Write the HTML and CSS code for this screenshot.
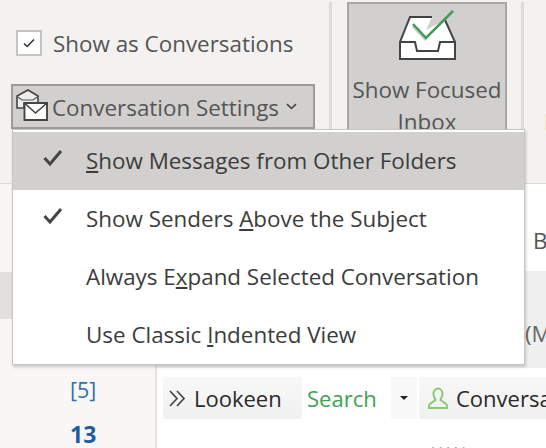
FILE: index.html
```html
<!DOCTYPE html>
<html lang="en">
<head>
<meta charset="utf-8">
<title>Conversation Settings</title>
<link rel="stylesheet" href="styles.css">
</head>
<body>
<div class="ribbon">
  <div class="group-conv">
    <label class="show-conv"><span class="checkbox"><svg width="14" height="12" viewBox="0 0 14 12"><path d="M2 6.500 5.200 9.500 12 2.500" fill="none" stroke="#333" stroke-width="1.600"/></svg></span><span>Show as Conversations</span></label>
    <div class="conv-btn">
      <svg class="conv-icon" width="34" height="36" viewBox="0 0 34 36"><path d="M2 21V9L13 3 23 9V16H9V21Z" fill="#eeedec" stroke="#444" stroke-width="1.600"/><path d="M2 9.500 7 13H18L23 9.500" fill="none" stroke="#555" stroke-width="1.200"/><path d="M9.500 16H32V33H9.500Z" fill="#fff" stroke="#444" stroke-width="1.900"/><path d="M9.500 16 20.500 26 32 16" fill="none" stroke="#444" stroke-width="1.600"/></svg>
      <span class="conv-label">Conversation Settings</span>
      <svg class="chev" width="11" height="7" viewBox="0 0 11 7"><path d="M1 1.200 5.500 5.500 10 1.200" fill="none" stroke="#444" stroke-width="1.600"/></svg>
    </div>
  </div>
  <div class="sep"></div>
  <div class="focused">
    <svg width="62" height="56" viewBox="0 0 62 56"><path d="M14 9H36L30 22 49 12 59 34V51H4V34Z" fill="#fff"/><path d="M36 9H14L4 34V51H59V34L49 12M4 34H19L21 43H42L44 34H59" fill="none" stroke="#444" stroke-width="2"/><path d="M17 18 30 32" fill="none" stroke="#999" stroke-width="3" opacity=".5"/><path d="M17 16 30 30 57 3" fill="none" stroke="#3f9c55" stroke-width="2.500"/></svg>
    <span class="focused-label">Show Focused<br>Inbox</span>
  </div>
  <div class="sep sep-last"></div>
  <div class="cut-off">I</div>
</div>
<div class="lower">
  <aside class="folders">
    <div class="folder-sel"></div>
    <div class="count">[5]</div>
    <div class="count-bold">13</div>
  </aside>
  <main class="content">
    <div class="mail-row">B</div>
    <div class="mail-row-sel">(M</div>
    <div class="tabs">
      <div class="tab tab-lookeen"><svg width="17" height="17" viewBox="0 0 17 17"><path d="M1 1 8 8.500 1 16M8 1 15 8.500 8 16" fill="none" stroke="#444" stroke-width="1.700"/></svg><span>Lookeen</span></div>
      <div class="tab-search">Search</div>
      <div class="tab-drop"><span class="tri"></span></div>
      <div class="tab tab-conv"><svg width="20" height="22" viewBox="0 0 20 22"><path d="M5.500 7a4.500 5.500 0 1 1 9 0c0 3-2 5-2 6l5 3.500c1 .7 1.500 1.500 1.500 2.500v2H1v-2c0-1 .5-1.800 1.500-2.500l5-3.500c0-1-2-3-2-6Z" fill="none" stroke="#86c96f" stroke-width="1.900"/></svg><span>Conversa</span></div>
    </div>
    <div class="dots">.....</div>
  </main>
</div>
<div class="menu">
  <div class="item item-on"><svg class="tick" width="20" height="18" viewBox="0 0 20 18"><path d="M1.500 9 7 15 18 2" fill="none" stroke="#444" stroke-width="3"/></svg><span><u>S</u>how Messages from Other Folders</span></div>
  <div class="item"><svg class="tick" width="20" height="18" viewBox="0 0 20 18"><path d="M1.500 9 7 15 18 2" fill="none" stroke="#444" stroke-width="3"/></svg><span>Show Senders <u>A</u>bove the Subject</span></div>
  <div class="item"><span class="notick"></span><span>Always E<u>x</u>pand Selected Conversation</span></div>
  <div class="item"><span class="notick"></span><span>Use Classic <u>I</u>ndented View</span></div>
</div>
</body>
</html>
```
FILE: styles.css
```css
* { box-sizing: border-box; }
html, body { margin: 0; height: 100%; overflow: hidden; }
body {
  position: relative;
  width: 546px;
  height: 448px;
  background: #fff;
  font-family: "Open Sans", "Noto Sans", sans-serif;
  font-size: 22.400px;
  color: #444;
}
.ribbon {
  display: flex;
  height: 184px;
  background: #f3f2f1;
  border-bottom: 1px solid #dcdbda;
}
.group-conv {
  width: 329px;
  padding: 28px 0 0 11px;
  flex: none;
}
.show-conv {
  display: flex;
  align-items: center;
  gap: 11px;
  margin-left: 5px;
  height: 30px;
  color: #555;
}
.checkbox {
  width: 26px;
  height: 26px;
  background: #fff;
  border: 2px solid #c4c4c4;
  display: flex;
  align-items: center;
  justify-content: center;
}
.conv-btn {
  display: flex;
  align-items: center;
  width: 304px;
  height: 45px;
  margin-top: 26px;
  background: #d2d0ce;
  border: 2px solid #9c9b9a;
  color: #555;
}
.conv-icon { margin-left: 2px; margin-top: -3px; flex: none; }
.conv-label { margin-left: 3px; margin-top: 2px; white-space: nowrap; }
.chev { margin-left: 7px; flex: none; }
.sep { width: 3px; height: 136px; background: #dddcdb; margin-top: 2px; flex: none; }
.focused {
  width: 160px;
  height: 140px;
  margin: 2px 0 0 15px;
  background: #d2d0ce;
  border: 2px solid #a8a7a6;
  display: flex;
  flex-direction: column;
  align-items: center;
  padding-top: 4px;
  flex: none;
}
.focused-label {
  text-align: center;
  line-height: 32px;
  color: #555;
  margin-top: 10px;
  white-space: nowrap;
}
.sep-last { margin-left: 14px; }
.cut-off { margin: 106px 0 0 20px; color: #444; }
.lower { display: flex; height: 264px; }
.folders {
  width: 157px;
  background: #f8f7f6;
  border-right: 2px solid #e4e3e2;
  padding-top: 88px;
  flex: none;
}
.folder-sel { height: 47px; background: #e1e0df; }
.count {
  margin: 57px 0 0 70px;
  color: #2f6fb4;
  font-size: 21.500px;
  line-height: 28px;
}
.count-bold {
  margin: 16px 0 0 70px;
  color: #1d5c9f;
  font-weight: 700;
  font-size: 23px;
  line-height: 28px;
}
.content { flex: 1; min-width: 0; overflow: hidden; }
.mail-row { height: 87px; padding: 41px 0 0 376px; color: #555; }
.mail-row-sel {
  height: 97px;
  background: #f0f0f0;
  padding: 49px 0 0 368px;
  color: #666;
  line-height: 28px;
}
.tabs {
  display: flex;
  align-items: stretch;
  height: 42px;
  margin: 9px 0 0 6px;
  white-space: nowrap;
  color: #2a2a2a;
  font-size: 22px;
}
.tab {
  display: flex;
  align-items: center;
  flex: none;
  gap: 8px;
  background: linear-gradient(#f8f8f8, #f0f0f0);
  border-radius: 3px;
}
.tab-lookeen { width: 139px; padding-left: 6px; }
.tab-search { flex: none; width: 89px; padding-left: 5px; line-height: 42px; color: #3fa154; background: #fff; }
.tab-drop {
  flex: none;
  width: 26px;
  background: #f8f8f8;
  display: flex;
  align-items: center;
  justify-content: center;
}
.tri {
  width: 0;
  height: 0;
  border-left: 4px solid transparent;
  border-right: 4px solid transparent;
  border-top: 4px solid #222;
}
.tab-conv { width: 180px; margin-left: 2px; padding-left: 9px; }
.dots { margin: 17px 0 0 274px; font-size: 14px; letter-spacing: 4px; line-height: 16px; color: #888; }
.menu {
  position: absolute;
  left: 12px;
  top: 129px;
  width: 513px;
  height: 236px;
  background: #fff;
  border: 1px solid #c6c6c6;
  box-shadow: 1px 2px 3px rgba(0, 0, 0, 0.2);
  padding: 2px 0;
  font-size: 22.400px;
}
.item {
  display: flex;
  align-items: center;
  height: 58px;
  padding-bottom: 2px;
  color: #3c3c3c;
  white-space: nowrap;
}
.item-on { background: #d2d0ce; }
.tick { margin-left: 30px; margin-right: 23px; margin-top: -4px; flex: none; }
.notick { width: 73px; flex: none; }
```
